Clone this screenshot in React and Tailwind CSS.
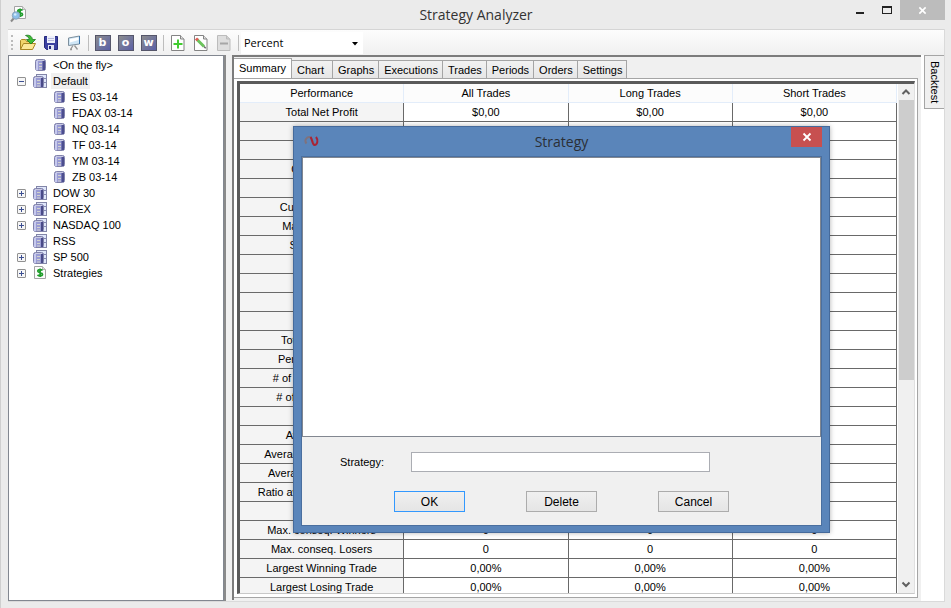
import { useState } from "react";
import clsx from "clsx";

const TREE = [
  { label: "<On the fly>", icon: "instrument" },
  { label: "Default", icon: "list", open: true, selected: true },
  { label: "ES 03-14", icon: "instrument", child: true },
  { label: "FDAX 03-14", icon: "instrument", child: true },
  { label: "NQ 03-14", icon: "instrument", child: true },
  { label: "TF 03-14", icon: "instrument", child: true },
  { label: "YM 03-14", icon: "instrument", child: true },
  { label: "ZB 03-14", icon: "instrument", child: true },
  { label: "DOW 30", icon: "list", open: false },
  { label: "FOREX", icon: "list", open: false },
  { label: "NASDAQ 100", icon: "list", open: false },
  { label: "RSS", icon: "list" },
  { label: "SP 500", icon: "list", open: false },
  { label: "Strategies", icon: "strategy", open: false },
];

const TABS = ["Summary", "Chart", "Graphs", "Executions", "Trades", "Periods", "Orders", "Settings"];

const ROWS = [
  ["Total Net Profit", "$0,00"],
  ["", ""],
  ["", ""],
  ["Commission", ""],
  ["", ""],
  ["Cumulative Profit", ""],
  ["Max. Drawdown", ""],
  ["Sharpe Ratio", ""],
  ["", ""],
  ["", ""],
  ["", ""],
  ["", ""],
  ["Total # of Trades", ""],
  ["Percent Profitable", ""],
  ["# of Winning Trades", ""],
  ["# of Losing Trades", ""],
  ["", ""],
  ["Average Trade", ""],
  ["Average Winning Trade", ""],
  ["Average Losing Trade", ""],
  ["Ratio avg. Win / avg. Loss", ""],
  ["", ""],
  ["Max. conseq. Winners", "0"],
  ["Max. conseq. Losers", "0"],
  ["Largest Winning Trade", "0,00%"],
  ["Largest Losing Trade", "0,00%"],
];

function InstrumentIcon() {
  return (
    <svg width="16" height="16" viewBox="0 0 16 16">
      <rect x="2.500" y="2.500" width="10" height="11" rx="2" fill="#9a9cd4" stroke="#8182ab" />
      <rect x="3" y="4" width="2" height="9" fill="#c6c9ee" />
      <rect x="9" y="4" width="1" height="9" fill="#7173b4" />
      <rect x="10" y="4" width="2" height="9" fill="#4c4e8e" />
      <path d="M6 6.500h3M6 9.500h3M6 12h3" stroke="#d3d3cd" />
      <path d="M4 3.500h7" stroke="#c9cae2" />
    </svg>
  );
}

function ListIcon() {
  return (
    <svg width="16" height="16" viewBox="0 0 16 16">
      <rect x="3.500" y="1.500" width="10" height="13" fill="#dfe6fa" stroke="#8285a8" />
      <path d="M10 5.500h4M10 9.500h4" stroke="#8589b0" />
      <rect x=".5" y="3.500" width="10" height="11" rx="2" fill="#9a9cd4" stroke="#8182ab" />
      <rect x="1" y="5" width="2" height="9" fill="#c6c9ee" />
      <rect x="8" y="5" width="2" height="9" fill="#484a88" />
      <path d="M4 7.500h3M4 10.500h3M4 13h3" stroke="#d3d3cd" />
      <path d="M2 4.500h7" stroke="#c9cae2" />
    </svg>
  );
}

function DollarPage({ x = 0, y = 0 }) {
  return (
    <g transform={`translate(${x} ${y})`}>
      <path d="M.5 .5h8l3 3v9H.5z" fill="#fcfcfc" stroke="#a3a3a3" />
      <path d="M8.500 .5v3h3" fill="#ddd" stroke="#b5b5b5" />
      <path
        d="M8.500 4.500C7.500 3.200 3.800 3.200 3.800 5.200c0 1.900 4.700.9 4.700 3 0 2-3.700 2-5 .6M6.100 2.500v8.500"
        fill="none"
        stroke="#1f9d2b"
        strokeWidth="1.700"
      />
    </g>
  );
}

function StrategyIcon() {
  return (
    <svg width="16" height="16" viewBox="0 0 16 16">
      <DollarPage x={1} y={1} />
    </svg>
  );
}

function AnalyzerIcon() {
  return (
    <svg width="18" height="18" viewBox="0 0 18 18">
      <DollarPage x={4} y={1} />
      <path d="M4 13L1 16.500" stroke="#8a8a8a" strokeWidth="2" />
      <circle cx="6" cy="10.500" r="3.700" fill="#8dc0ea" stroke="#89a3bb" />
      <circle cx="5.200" cy="9.500" r="1.300" fill="#d3ebfc" />
    </svg>
  );
}

const TREE_ICONS = { instrument: InstrumentIcon, list: ListIcon, strategy: StrategyIcon };

function FolderIcon() {
  return (
    <svg width="18" height="18" viewBox="0 0 18 18">
      <path d="M1.500 15.500v-9l1-1h4l1 2h6v3" fill="#f2d56a" stroke="#a88723" />
      <path d="M1.500 15.500l3-6h12l-3 6z" fill="#fce898" stroke="#a88723" strokeLinejoin="round" />
      <path
        d="M6.500 1.500C10 .5 13 2 13.500 5.500h3l-4.500 4.500-4.500-4.500h2.700C10 3.500 8.800 2.500 6.500 1.500z"
        fill="#3dbd35"
        stroke="#1f7a22"
        strokeWidth=".8"
      />
    </svg>
  );
}

function SaveIcon() {
  return (
    <svg width="14" height="14" viewBox="0 0 14 14">
      <path d="M.5 .5h13v13h-11l-2-2z" fill="#3c41a0" stroke="#24297c" />
      <rect x="3" y="0" width="8" height="7" fill="#eef0fb" />
      <path d="M4 2.500h6M4 4.500h6" stroke="#b5b9dc" />
      <rect x="4" y="9" width="6" height="5" fill="#dfe2f3" />
      <rect x="5" y="10" width="2" height="3" fill="#24297c" />
    </svg>
  );
}

function BoardIcon() {
  return (
    <svg width="14" height="16" viewBox="0 0 14 16">
      <path d="M6 10.500l-2.500 4M7.500 10.500l3 4M3 14.500h2" fill="none" stroke="#969696" strokeWidth="1.300" />
      <path d="M1.500 3l11-2v8l-11 1.500z" fill="#cfe6f6" stroke="#7d8f9d" />
      <path d="M3 4l8.500-1.500v2.500L3 7.500z" fill="#fff" />
      <path d="M12.500 1v8" stroke="#3d73a6" />
    </svg>
  );
}

function PageIcon({ kind }) {
  const off = kind === "remove";
  return (
    <svg width="16" height="16" viewBox="0 0 16 16">
      <path d="M1.500 .5h9l3.500 3.500v11.500H1.500z" fill={off ? "#dedede" : "#fff"} stroke={off ? "#bcbcbc" : "#848484"} />
      <path d="M10.500 .5V4H14" fill={off ? "#cfcfcf" : "#e0e0e0"} stroke={off ? "#bcbcbc" : "#848484"} />
      {kind === "add" && <path d="M3.500 9h9M8 4.500v9" stroke="#41cc30" strokeWidth="2" />}
      {kind === "edit" && (
        <>
          <path d="M4 4.500l7 7" stroke="#6cc35c" strokeWidth="3" />
          <path d="M3 3.500l1.800 1.800" stroke="#e05b55" strokeWidth="3" />
          <path d="M11 11.500l1.700 1.700" stroke="#666" strokeWidth="1.500" />
        </>
      )}
      {off && <path d="M4 8.500h8" stroke="#a6a6a6" strokeWidth="2" />}
    </svg>
  );
}

function NinjaIcon() {
  return (
    <svg width="16" height="12" viewBox="0 0 16 12">
      <path d="M2.500 8.500C0 5.500 2.500 2 5 2c3 0 3.500 5.500 5.500 8" fill="none" stroke="#80727c" strokeWidth="2" />
      <path d="M6.500 2C8.500 4 8 10 10.500 10c3 0 4-5 1.500-8" fill="none" stroke="#a92335" strokeWidth="2" />
    </svg>
  );
}

function Cross({ size = 10 }) {
  return (
    <svg width={size} height={size} viewBox="0 0 10 10">
      <path d="M1.500 1.500l7 7M8.500 1.500l-7 7" stroke="#fff" strokeWidth="1.800" />
    </svg>
  );
}

function ToolButton({ label, children }) {
  return (
    <button type="button" aria-label={label} className="flex h-[18px] w-[23px] items-center justify-center">
      {children}
    </button>
  );
}

function LetterButton({ letter }) {
  return (
    <ToolButton label={letter}>
      <span className="flex h-4 w-4 items-center justify-center border border-[#55566a] bg-linear-to-br from-[#8c8c8c] to-[#5c5fa6] font-['DejaVu_Sans'] text-[11px] leading-3 font-bold text-white">
        {letter}
      </span>
    </ToolButton>
  );
}

function Separator() {
  return <span className="mr-[2px] ml-[3px] h-4 w-px bg-[#bdbdbd]" />;
}

function TitleBar() {
  return (
    <header className="grid h-[29px] shrink-0 grid-cols-[1fr_auto_1fr]">
      <div className="pt-[5px] pl-[9px]">
        <AnalyzerIcon />
      </div>
      <h1 className="font-['Open_Sans',sans-serif] text-[14px] leading-[29px] text-[#333]">Strategy Analyzer</h1>
      <div className="flex justify-end pr-[6px]">
        <button type="button" aria-label="Minimize" className="flex h-5 w-[26px] items-center justify-center pt-[6px]">
          <span className="h-[2px] w-2 bg-[#222]" />
        </button>
        <button type="button" aria-label="Maximize" className="flex h-5 w-[27px] items-center justify-center">
          <span className="h-2 w-[10px] border border-t-2 border-[#222]" />
        </button>
        <button type="button" aria-label="Close" className="flex h-5 w-[45px] items-center justify-center bg-[#bcbcbc]">
          <Cross size={9} />
        </button>
      </div>
    </header>
  );
}

function Toolbar() {
  return (
    <div className="flex h-[26px] shrink-0 items-center border-t border-[#d5d5d5] bg-linear-to-b from-[#fdfdfd] to-[#f0f0f0] pl-[3px]">
      <span className="mr-[3px] h-[15px] w-[2px] border-l-2 border-dotted border-[#bbb]" />
      <ToolButton label="Open"><FolderIcon /></ToolButton>
      <ToolButton label="Save"><SaveIcon /></ToolButton>
      <ToolButton label="Template"><BoardIcon /></ToolButton>
      <Separator />
      <LetterButton letter="b" />
      <LetterButton letter="o" />
      <LetterButton letter="w" />
      <Separator />
      <ToolButton label="Add"><PageIcon kind="add" /></ToolButton>
      <ToolButton label="Edit"><PageIcon kind="edit" /></ToolButton>
      <ToolButton label="Remove"><PageIcon kind="remove" /></ToolButton>
      <Separator />
      <div className="relative">
        <select
          aria-label="Display units"
          defaultValue="Percent"
          className="block h-[22px] w-[122px] appearance-none bg-white pl-[3px] font-['Open_Sans',sans-serif] text-[11px] leading-[22px]"
        >
          <option>Percent</option>
          <option>Currency</option>
          <option>Points</option>
        </select>
        <svg className="pointer-events-none absolute top-[10px] right-1" width="7" height="4" viewBox="0 0 7 4">
          <path d="M0 0h6L3 3.500z" fill="#000" />
        </svg>
      </div>
    </div>
  );
}

function Tree() {
  return (
    <ul className="w-[216px] shrink-0 border border-[#828790] bg-white pt-px">
      {TREE.map((node) => {
        const Icon = TREE_ICONS[node.icon];
        return (
          <li key={node.label} className={clsx("flex h-4 items-center pl-2", node.child && "ml-[19px]")}>
            <span className="mr-[7px] flex w-[9px]">
              {node.open !== undefined && (
                <button type="button" aria-label={`Toggle ${node.label}`} className="h-[9px] w-[9px]">
                  <svg width="9" height="9" viewBox="0 0 9 9">
                    <rect x=".5" y=".5" width="8" height="8" rx=".5" fill="#f6f6f6" stroke="#919191" />
                    <path d={node.open ? "M2 4.500h5" : "M2 4.500h5M4.500 2v5"} stroke="#3c4f92" />
                  </svg>
                </button>
              )}
            </span>
            <Icon />
            <span className={clsx("ml-[2px] px-[2px] leading-4 whitespace-nowrap", node.selected && "bg-[#f0f0f0]")}>
              {node.label}
            </span>
          </li>
        );
      })}
    </ul>
  );
}

function TabStrip({ active, onSelect }) {
  return (
    <div role="tablist" className="flex h-[21px] shrink-0 items-end">
      {TABS.map((tab) => (
        <button
          key={tab}
          type="button"
          role="tab"
          aria-selected={tab === active}
          onClick={() => onSelect(tab)}
          className={clsx(
            "border-t border-r border-[#a5a5a5] text-left",
            tab === active
              ? "-mb-px h-[21px] bg-white px-[5px] pb-[2px]"
              : "h-[18px] min-w-[41px] bg-linear-to-b from-[#f2f2f2] to-[#e6e6e6] pr-1 pl-[5px]",
          )}
        >
          {tab}
        </button>
      ))}
    </div>
  );
}

function Scrollbar() {
  return (
    <div className="flex w-[17px] shrink-0 flex-col items-center border-l border-white bg-[#f0f0f0]">
      <svg className="shrink-0" width="16" height="16" viewBox="0 0 16 16">
        <path d="M4.500 10L8 6.500l3.500 3.500" fill="none" stroke="#606060" strokeWidth="2" />
      </svg>
      <div className="h-[55%] w-[15px] bg-[#cdcdcd]" />
      <svg className="mt-auto shrink-0" width="16" height="16" viewBox="0 0 16 16">
        <path d="M4.500 5.500L8 9l3.500-3.500" fill="none" stroke="#606060" strokeWidth="2" />
      </svg>
    </div>
  );
}

function SummaryTable() {
  return (
    <div className="flex min-h-0 flex-1 border-t-[3px] border-r border-b border-l-[3px] border-t-[#5a5a5a] border-r-[#e0e0e0] border-b-[#c8c8c8] border-l-[#5a5a5a]">
      <div className="min-w-0 flex-1 overflow-hidden">
        <table className="w-full table-fixed border-separate border-spacing-0 text-center">
          <thead>
            <tr>
              {["Performance", "All Trades", "Long Trades", "Short Trades"].map((h) => (
                <th key={h} className="h-[19px] border-r border-b border-[#e3edfa] bg-[#fcfcfc] p-0 font-normal">
                  {h}
                </th>
              ))}
            </tr>
          </thead>
          <tbody>
            {ROWS.map(([name, value], i) => (
              <tr key={i}>
                <th className="h-[19px] border-r border-b border-[#696969] bg-[#f4f4f4] p-0 font-normal whitespace-nowrap">
                  {name}
                </th>
                <td className="border-r border-b border-[#696969] bg-white p-0">{value}</td>
                <td className="border-r border-b border-[#696969] bg-white p-0">{value}</td>
                <td className="border-r border-b border-[#696969] bg-white p-0">{value}</td>
              </tr>
            ))}
          </tbody>
        </table>
      </div>
      <Scrollbar />
    </div>
  );
}

function DialogButton({ primary, children }) {
  return (
    <button
      type="button"
      className={clsx(
        "h-[21px] w-[71px] border bg-linear-to-b from-[#f0f0f0] to-[#e5e5e5] text-[12px] leading-4",
        primary ? "border-[#3298fe]" : "border-[#acacac]",
      )}
    >
      {children}
    </button>
  );
}

function StrategyDialog() {
  const [name, setName] = useState("");

  return (
    <div
      role="dialog"
      aria-labelledby="dialog-title"
      className="absolute top-[126px] left-[292px] w-[537px] border border-[#456a9b] bg-[#5a85ba] px-[7px] pb-[6px] shadow-[0_0_5px_rgba(0,0,0,0.3)]"
    >
      <div className="grid h-[29px] grid-cols-[1fr_auto_1fr]">
        <div className="pt-2 pl-[3px]">
          <NinjaIcon />
        </div>
        <h2 id="dialog-title" className="font-['Open_Sans',sans-serif] text-[14px] leading-[29px] text-[#2b2f36]">
          Strategy
        </h2>
        <button
          type="button"
          aria-label="Close dialog"
          className="flex h-5 w-[31px] items-center justify-center justify-self-end bg-[#c75050]"
        >
          <Cross />
        </button>
      </div>
      <div className="border border-[#4a6f9f] bg-[#f0f0f0]">
        <div className="h-[280px] border border-[#828790] bg-white" />
        <div className="flex items-center pt-[15px] pl-[38px]">
          <label htmlFor="strategy-name" className="w-[71px]">
            Strategy:
          </label>
          <input
            id="strategy-name"
            value={name}
            onChange={(e) => setName(e.target.value)}
            className="h-5 w-[299px] border border-[#abadb3] bg-white px-1"
          />
        </div>
        <div className="flex gap-[61px] pt-[19px] pb-[13px] pl-[92px]">
          <DialogButton primary>OK</DialogButton>
          <DialogButton>Delete</DialogButton>
          <DialogButton>Cancel</DialogButton>
        </div>
      </div>
    </div>
  );
}

export default function App() {
  const [tab, setTab] = useState("Summary");

  return (
    <div className="relative flex h-screen flex-col overflow-hidden border-l border-[#cfcfcf] bg-[#ebebeb] font-['Liberation_Sans',sans-serif] text-[11px] leading-[14px] text-black">
      <TitleBar />
      <main className="mr-[6px] mb-[6px] ml-[7px] flex min-h-0 flex-1 flex-col border-r border-b border-[#dadada] bg-[#f0f0f0]">
        <Toolbar />
        <div className="flex min-h-0 flex-1">
          <Tree />
          <div className="mr-[6px] w-[2px] bg-[#8a8a8a]" />
          <section className="mb-px flex min-w-0 flex-1 flex-col border-t-2 border-l-2 border-[#7c7c7c] bg-[#f0f0f0]">
            <TabStrip active={tab} onSelect={setTab} />
            <div className="mr-[3px] mb-[2px] flex min-h-0 flex-1 flex-col border-t border-r border-b border-[#a5a5a5] bg-white pt-[2px] pr-[2px] pb-[3px] pl-[3px]">
              <SummaryTable />
            </div>
          </section>
          <aside className="w-[23px] shrink-0 bg-white pl-[3px]">
            <button
              type="button"
              className="h-[54px] w-full border border-r-0 border-[#a5a5a5] bg-[#f0f0f0] leading-[18px] [writing-mode:vertical-rl]"
            >
              Backtest
            </button>
          </aside>
        </div>
      </main>
      <StrategyDialog />
    </div>
  );
}
